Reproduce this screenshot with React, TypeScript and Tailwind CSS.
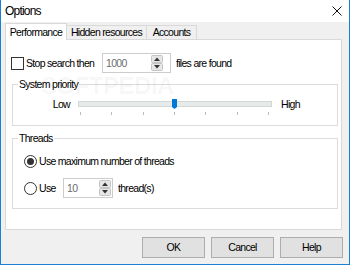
import React from "react";

function Spin({ left }: { left: number }) {
  return (
    <svg width="12" height="16" viewBox="0 0 12 16" className="absolute top-[1px]" style={{ left }}>
      <rect x="0.5" y="0.5" width="11" height="7" rx="1" fill="#e6e6e6" stroke="#c4c4c4" />
      <rect x="0.5" y="8.5" width="11" height="7" rx="1" fill="#e6e6e6" stroke="#c4c4c4" />
      <path d="M3 6 L6 2.5 L9 6 Z" fill="#333" />
      <path d="M3 10 L6 13.5 L9 10 Z" fill="#333" />
    </svg>
  );
}

export default function App() {
  return (
    <div className="w-[350px] h-[265px] bg-[#f0f0f0] border-x border-b border-[#1c7fd6] flex flex-col relative text-[10.5px] leading-[13px] tracking-[-0.7px] whitespace-nowrap text-black font-['Liberation_Sans',Arial,sans-serif]">
      {/* title bar */}
      <div className="h-[22px] bg-white flex items-center justify-between pl-[4px] pr-[7px] shrink-0">
        <span className="text-[12px] leading-[14px] tracking-[-0.8px]">Options</span>
        <svg width="10" height="10" viewBox="0 0 10 10">
          <path d="M0.5 0.5 L9.5 9.5 M9.5 0.5 L0.5 9.5" stroke="#111" strokeWidth="1" />
        </svg>
      </div>

      {/* tabs */}
      <div className="pt-[1px] pl-[4px]">
        <div className="flex items-end h-[16px]">
          <div className="relative z-10 h-[17px] -mb-px w-[62px] bg-white border-x border-t border-[#d9d9d9] flex items-center justify-center">
            Performance
          </div>
          <div className="h-[14px] w-[81px] -ml-px border-x border-t border-[#d9d9d9] flex items-center justify-center">
            Hidden resources
          </div>
          <div className="h-[14px] w-[51px] -ml-px border-x border-t border-[#d9d9d9] flex items-center justify-center">
            Accounts
          </div>
        </div>

        {/* panel */}
        <div className="w-[337px] h-[191px] bg-white border border-[#d9d9d9] flex flex-col">
          {/* row 1 */}
          <div className="mt-[13px] h-[20px] flex items-center pl-[5px]">
            <div className="w-[91px] flex items-center">
              <div className="w-[13px] h-[13px] border border-[#333] bg-white shrink-0" />
              <span className="ml-[2px]">Stop search then</span>
            </div>
            <div className="relative w-[69px] h-[20px] border border-[#cccccc] bg-white flex items-center pl-[3px] text-[#6d6d6d]">
              1000
              <Spin left={48} />
            </div>
            <span className="ml-[5px]">files are found</span>
          </div>

          {/* system priority */}
          <div className="relative mt-[11px] ml-[6px] w-[326px] h-[42px] border border-[#dcdcdc] pt-[13px] flex items-start">
            <span className="absolute -top-[7px] left-[5px] bg-white px-[1px] leading-[13px]">System priority</span>
            <div className="w-[65px] text-right pr-[8px] leading-[12px]">Low</div>
            <svg width="194" height="17" viewBox="0 0 194 17" className="shrink-0">
              <rect x="0.5" y="3.5" width="193" height="5" fill="#e7eaea" stroke="#d6d6d6" />
              {[2, 33, 65, 96, 127, 159, 190].map((x) => (
                <rect key={x} x={x} y="14" width="1" height="3" fill="#bdbdbd" />
              ))}
              <path d="M94 1 H99 V9 L96.5 11 L94 9 Z" fill="#0078d7" />
            </svg>
            <div className="ml-[9px] leading-[12px]">High</div>
          </div>

          {/* threads */}
          <div className="relative mt-[12px] ml-[6px] w-[326px] h-[71px] border border-[#dcdcdc] pt-[16px] pl-[11px] flex flex-col">
            <span className="absolute -top-[7px] left-[5px] bg-white px-[1px] leading-[13px]">Threads</span>
            <div className="h-[13px] flex items-center">
              <div className="w-[13px] h-[13px] rounded-full border border-[#333] bg-white flex items-center justify-center shrink-0">
                <div className="w-[7px] h-[7px] rounded-full bg-[#333]" />
              </div>
              <span className="ml-[2px]">Use maximum number of threads</span>
            </div>
            <div className="mt-[10px] h-[20px] flex items-center">
              <div className="w-[13px] h-[13px] rounded-full border border-[#333] bg-white shrink-0" />
              <span className="ml-[2px] w-[24px]">Use</span>
              <div className="relative w-[50px] h-[20px] border border-[#cccccc] bg-white flex items-center pl-[3px] text-[#6d6d6d]">
                10
                <Spin left={35} />
              </div>
              <span className="ml-[5px]">thread(s)</span>
            </div>
          </div>
        </div>
      </div>

      {/* buttons */}
      <div className="mt-[7px] flex justify-end gap-[6px] pr-[6px]">
        {["OK", "Cancel", "Help"].map((b) => (
          <div key={b} className="w-[63px] h-[21px] bg-[#e1e1e1] border border-[#adadad] flex items-center justify-center">
            {b}
          </div>
        ))}
      </div>

      {/* watermark */}
      <div className="absolute left-[40px] top-[74px] text-[24px] leading-[24px] font-bold tracking-[-0.5px] text-black/[0.04] pointer-events-none">
        SOFTPEDIA
      </div>
    </div>
  );
}
